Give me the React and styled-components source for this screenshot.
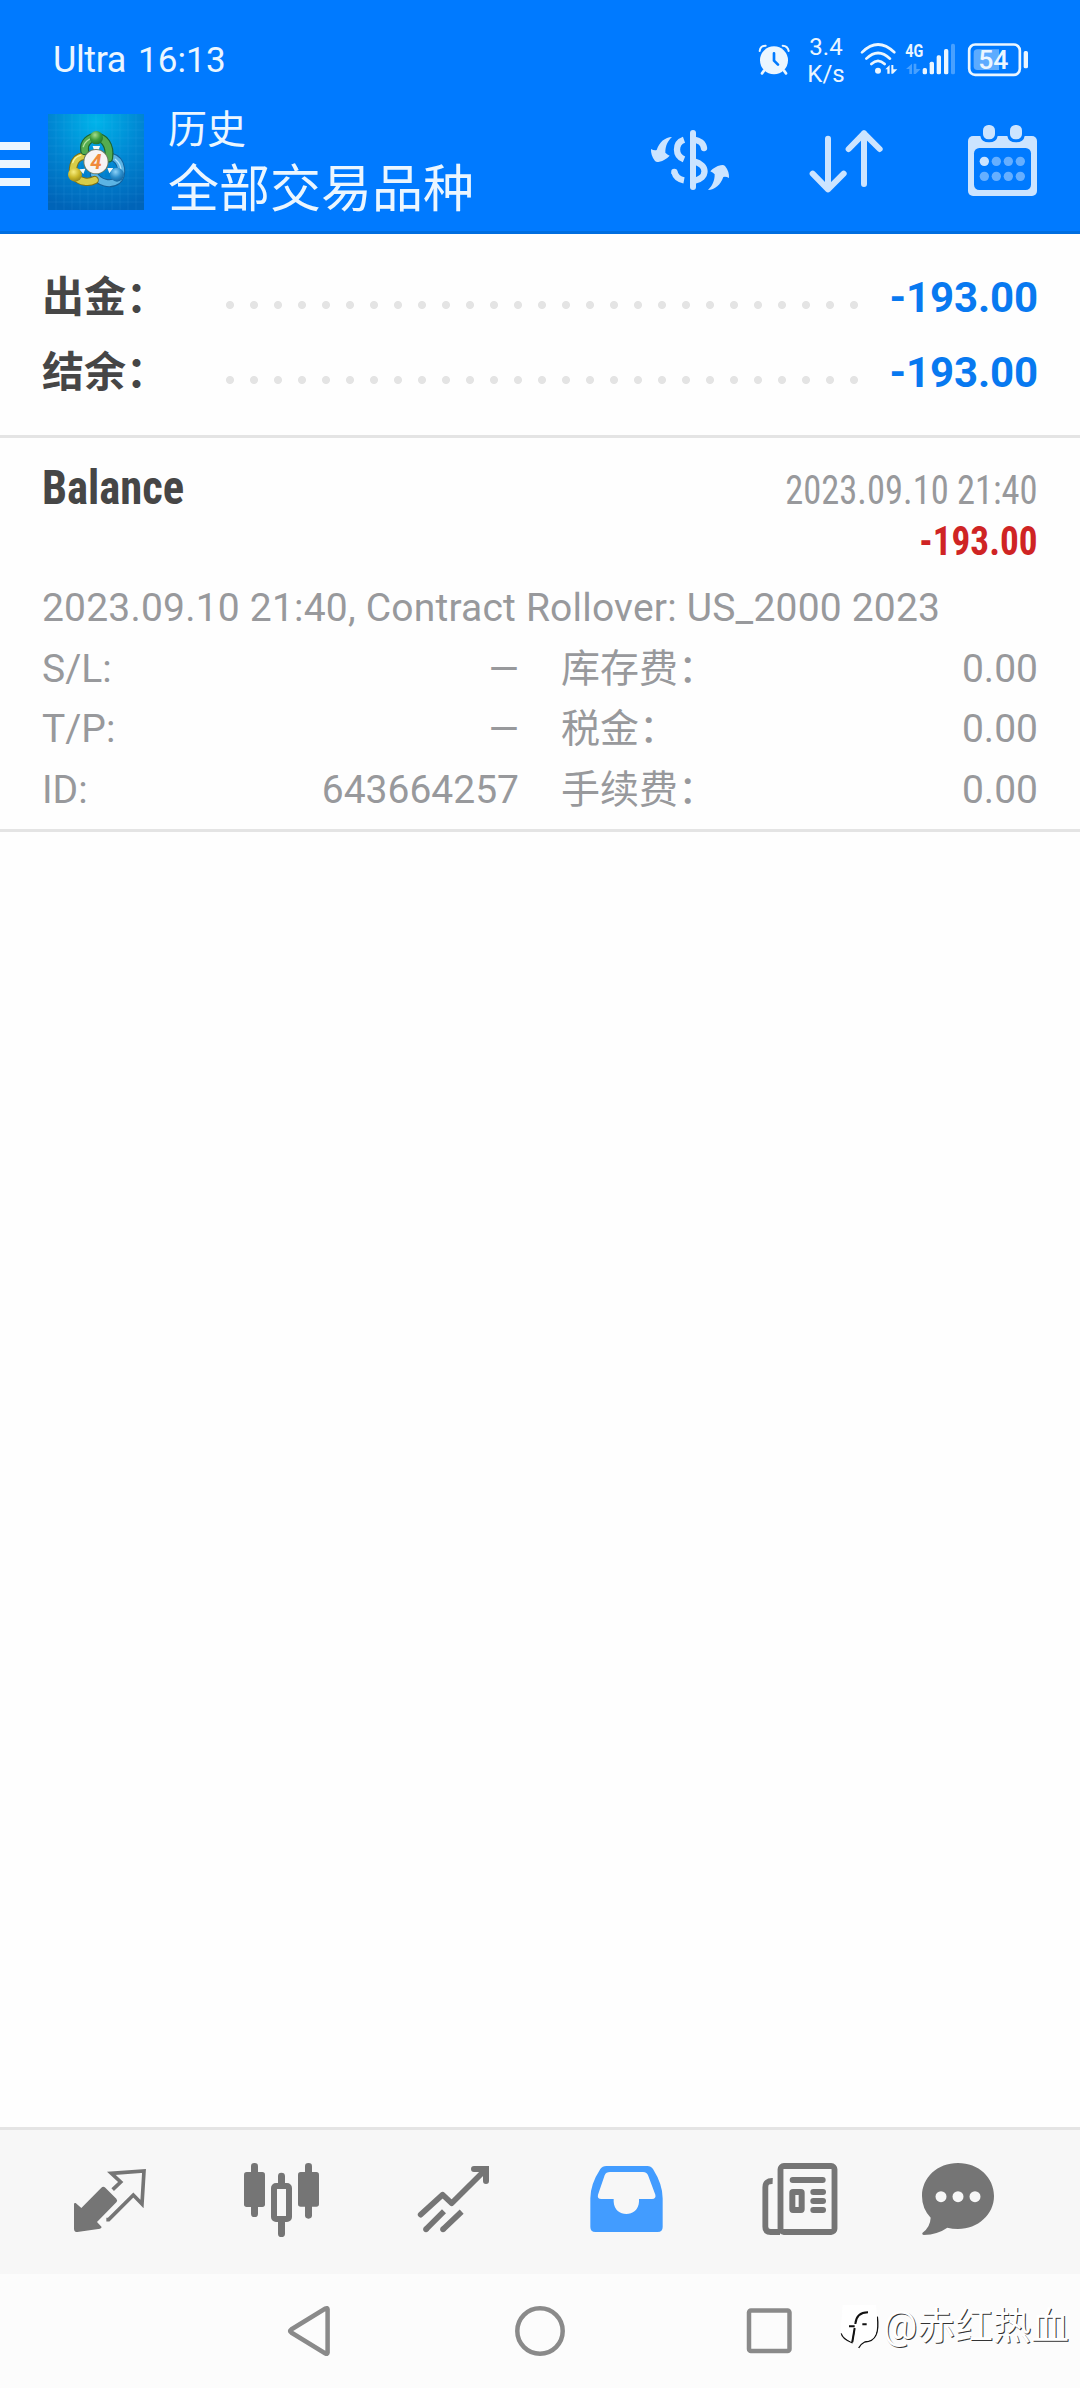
import styled, { createGlobalStyle } from 'styled-components';

const totals = [
  { label: '出金：', value: '-193.00' },
  { label: '结余：', value: '-193.00' },
];

const details = [
  { label: 'S/L:', value: '—', label2: '库存费：', value2: '0.00' },
  { label: 'T/P:', value: '—', label2: '税金：', value2: '0.00' },
  { label: 'ID:', value: '643664257', label2: '手续费：', value2: '0.00' },
];

const App = () => {
  return (
    <Screen>
      <GlobalStyle />
      <Header>
        <StatusBar />
        <Toolbar>
          <MenuIcon />
          <LogoIcon />
          <Titles>
            <Subtitle>历史</Subtitle>
            <Title>全部交易品种</Title>
          </Titles>
          <Actions>
            <CurrencyIcon />
            <SortIcon />
            <CalendarIcon />
          </Actions>
        </Toolbar>
      </Header>
      <Totals>
        {totals.map(total => (
          <TotalRow key={total.label}>
            <TotalLabel>{total.label}</TotalLabel>
            <Dots />
            <TotalValue>{total.value}</TotalValue>
          </TotalRow>
        ))}
      </Totals>
      <Deal>
        <DealHead>
          <DealName>Balance</DealName>
          <DealSide>
            <DealDate>2023.09.10 21:40</DealDate>
            <DealProfit>-193.00</DealProfit>
          </DealSide>
        </DealHead>
        <Comment>2023.09.10 21:40, Contract Rollover: US_2000 2023</Comment>
        {details.map(row => (
          <DetailRow key={row.label}>
            <DetailCell>
              <span>{row.label}</span>
              <span>{row.value}</span>
            </DetailCell>
            <DetailCell>
              <span>{row.label2}</span>
              <span>{row.value2}</span>
            </DetailCell>
          </DetailRow>
        ))}
      </Deal>
      <Spacer />
      <TabBar>
        <QuotesIcon />
        <ChartIcon />
        <TradeIcon />
        <HistoryIcon />
        <NewsIcon />
        <ChatIcon />
      </TabBar>
      <NavBar>
        <BackIcon />
        <HomeIcon />
        <RecentIcon />
        <Watermark>
          <WatermarkIcon />
          <WatermarkText>@赤红热血</WatermarkText>
        </Watermark>
      </NavBar>
    </Screen>
  );
};

export default App;

const StatusBar = () => {
  return (
    <StatusWrapper>
      <Carrier>Ultra</Carrier>
      <Clock>16:13</Clock>
      <StatusIcons>
        <svg width='32' height='35' viewBox='384 126 96 105'>
          <circle cx='432' cy='181' r='42' fill='#ebf6ff' />
          <path d='M389 153 Q391 137 407 137 M458 137 Q473 137 476 153' stroke='#ebf6ff' strokeWidth='6' strokeLinecap='round' fill='none' />
          <path d='M402 212 L396 220 M462 212 L468 220' stroke='#ebf6ff' strokeWidth='8' strokeLinecap='round' />
          <path d='M432 160 V182 L444 194' stroke='#007aff' strokeWidth='8' strokeLinecap='round' strokeLinejoin='round' fill='none' />
        </svg>
        <Speed>
          <span>3.4</span>
          <span>K/s</span>
        </Speed>
        <WifiSvg width='38' height='35' viewBox='690 126 114 105'>
          <g fill='none' stroke='#ebf6ff' strokeWidth='8' strokeLinecap='round'>
            <path d='M696 157 Q744 110 793 157' />
            <path d='M709 176 Q744 142 780 176' />
            <path d='M724 192 Q744 173 764 192' />
          </g>
          <circle cx='744' cy='212' r='9' fill='#ebf6ff' />
          <path d='M766 208 L779 195 V221 H772 V208 Z M784 195 H790 V208 H802 L789 221 H784 Z' fill='#ebf6ff' />
        </WifiSvg>
        <SignalSvg width='51' height='35' viewBox='825 126 153 105'>
          <text x='826' y='172' fontSize='56' fontWeight='700' fontFamily='Roboto, sans-serif' fill='#ebf6ff' textLength='54' lengthAdjust='spacingAndGlyphs'>4G</text>
          <path d='M828 207 L846 191 V222 H838 V207 Z M851 191 H859 V207 H872 L857 222 H851 Z' fill='#47a0ff' />
          <g fill='#ebf6ff'>
            <rect x='878' y='204' width='13' height='19' rx='5' />
            <rect x='899' y='185' width='13' height='38' rx='5' />
            <rect x='920' y='166' width='13' height='57' rx='5' />
            <rect x='942' y='147' width='13' height='76' rx='5' />
          </g>
          <rect x='963' y='131' width='12' height='92' rx='5' fill='#47a0ff' />
        </SignalSvg>
        <BatterySvg width='62' height='35' viewBox='1011 126 186 105'>
          <rect x='1017.5' y='133.5' width='152' height='91' rx='18' fill='none' stroke='#ebf6ff' strokeWidth='8' />
          <path d='M1042 148 H1107 V210 H1042 Q1031 210 1031 199 V159 Q1031 148 1042 148 Z' fill='#5cabff' />
          <rect x='1181' y='153' width='13' height='52' rx='5' fill='#ebf6ff' />
          <text x='1090' y='206' fontSize='80' fontWeight='500' fontFamily='Roboto, sans-serif' fill='#ebf6ff' textAnchor='middle'>54</text>
        </BatterySvg>
      </StatusIcons>
    </StatusWrapper>
  );
};

const MenuIcon = () => (
  <svg width='30' height='44' viewBox='0 0 30 44' fill='#ebf6ff'>
    <path d='M0 0 H30 V8 H0 Z M0 18 H30 V26 H0 Z M0 36 H30 V44 H0 Z' />
  </svg>
);

const LogoIcon = () => (
  <LogoSvg width='96' height='96' viewBox='144 342 288 288'>
    <defs>
      <radialGradient id='sky' cx='0.5' cy='0.08' r='0.95'>
        <stop offset='0' stopColor='#00b4ea' />
        <stop offset='0.5' stopColor='#0086d2' />
        <stop offset='1' stopColor='#0064b8' />
      </radialGradient>
      <radialGradient id='green' cx='0.4' cy='0.3' r='0.8'>
        <stop offset='0' stopColor='#a5dc8c' />
        <stop offset='0.5' stopColor='#3c9c3c' />
        <stop offset='1' stopColor='#1c6a28' />
      </radialGradient>
      <radialGradient id='yellow' cx='0.4' cy='0.3' r='0.8'>
        <stop offset='0' stopColor='#f8ee80' />
        <stop offset='0.5' stopColor='#cdb92a' />
        <stop offset='1' stopColor='#8a7c14' />
      </radialGradient>
      <radialGradient id='blue' cx='0.4' cy='0.3' r='0.8'>
        <stop offset='0' stopColor='#8cd2f8' />
        <stop offset='0.5' stopColor='#2c8ecc' />
        <stop offset='1' stopColor='#0c5a96' />
      </radialGradient>
    </defs>
    <rect x='144' y='342' width='288' height='288' fill='url(#sky)' />
    <path
      d='M168 342 V630 M192 342 V630 M216 342 V630 M240 342 V630 M264 342 V630 M288 342 V630 M312 342 V630 M336 342 V630 M360 342 V630 M384 342 V630 M408 342 V630 M144 366 H432 M144 390 H432 M144 414 H432 M144 438 H432 M144 462 H432 M144 486 H432 M144 510 H432 M144 534 H432 M144 558 H432 M144 582 H432 M144 606 H432'
      stroke='#5cc8f8'
      strokeOpacity='0.16'
      strokeWidth='2'
    />
    <g fill='none' strokeLinecap='round'>
      <path d='M333 470 C370 480 370 530 352 542 C330 558 298 548 282 524' stroke='#14609a' strokeWidth='24' />
      <path d='M333 470 C370 480 370 530 352 542 C330 558 298 548 282 524' stroke='#5cb4e4' strokeWidth='18' />
      <path d='M250 468 C218 474 212 514 228 532 C240 546 266 550 284 540' stroke='#7c7014' strokeWidth='25' />
      <path d='M250 468 C218 474 212 514 228 532 C240 546 266 550 284 540' stroke='#d8cc48' strokeWidth='19' />
      <path d='M254 452 C250 426 270 412 289 412 C312 412 332 436 326 474' stroke='#1c6430' strokeWidth='27' />
      <path d='M254 452 C250 426 270 412 289 412 C312 412 332 436 326 474' stroke='#54ac50' strokeWidth='20' />
      <path d='M250 440 C254 424 268 416 276 416' stroke='#b4e4a0' strokeWidth='4' />
      <path d='M218 488 C222 476 232 468 242 466' stroke='#f8f4a0' strokeWidth='4' />
      <path d='M346 478 C362 492 364 508 362 518' stroke='#b4e4ff' strokeWidth='4' />
    </g>
    <circle cx='289' cy='413' r='20' fill='url(#green)' />
    <circle cx='225' cy='524' r='21' fill='url(#yellow)' />
    <circle cx='351' cy='524' r='21' fill='url(#blue)' />
    <path d='M278 438 H300 L294 456 H284 Z M238 508 L256 506 L250 522 Z M322 504 H340 L328 520 Z' fill='#f4f8f4' />
    <circle cx='288' cy='485' r='38' fill='#6c7c64' />
    <circle cx='288' cy='485' r='35' fill='#f6f4f4' />
    <text x='288' y='507' fontSize='62' fontWeight='700' fontStyle='italic' fontFamily='Roboto, sans-serif' fill='#f08a3c' textAnchor='middle'>4</text>
  </LogoSvg>
);

const CurrencyIcon = () => (
  <svg width='80' height='73' viewBox='60 372 240 219'>
    <g fill='none' stroke='#cce4ff' strokeWidth='19'>
      <path d='M189 399 V561' strokeWidth='18' strokeLinecap='round' />
      <path d='M192 419 C208 421 220 430 222 444' strokeLinecap='round' />
      <path d='M162 419 C134 429 134 467 162 478' />
      <path d='M192 484 C234 494 234 534 192 543' />
      <path d='M133 516 C136 528 146 538 162 541' />
      <circle cx='133' cy='516' r='9.5' fill='#cce4ff' stroke='none' />
    </g>
    <g fill='#cce4ff'>
      <path id='swapArrow' d='M126 411 C105 412 88 426 80 450 Q72 452 63 447 Q62 467 75 483 Q80 488 88 485 Q106 481 119 467 Q112 464 106 458 C106 438 113 423 126 411 Z' />
      <use href='#swapArrow' transform='rotate(180 180 490.5)' />
    </g>
  </svg>
);

const SortIcon = () => (
  <SortSvg width='76' height='73' viewBox='534 372 228 219'>
    <g fill='none' stroke='#cce4ff' strokeWidth='18' strokeLinecap='round' strokeLinejoin='round'>
      <path d='M594 416 V568 M548 521 L594 568 L641 521' />
      <path d='M702 552 V400 M656 447 L702 400 L749 447' />
    </g>
  </SortSvg>
);

const CalendarIcon = () => (
  <CalendarSvg width='71' height='73' viewBox='1011 372 213 219'>
    <rect x='1014' y='408' width='207' height='180' rx='15' fill='#cce4ff' />
    <rect x='1032' y='444' width='171' height='126' rx='16' fill='#007aff' />
    <path d='M1051 400 V408 Q1054 427 1077 427 Q1100 427 1103 408 V400 Z M1132 400 V408 Q1135 427 1158 427 Q1181 427 1184 408 V400 Z' fill='#007aff' />
    <rect x='1059' y='375' width='36' height='43' rx='16' fill='#cce4ff' />
    <rect x='1140' y='375' width='36' height='43' rx='16' fill='#cce4ff' />
    {[484, 529].map(y =>
      [1063, 1099, 1135, 1171].map(x => (
        <circle key={`${x}-${y}`} cx={x} cy={y} r='14' fill={x === 1063 && y === 484 ? '#cce4ff' : '#66afff'} />
      ))
    )}
  </CalendarSvg>
);

const QuotesIcon = () => (
  <TabSvg viewBox='30 90 360 360'>
    <path d='M184 233 Q190 228 196 233 L229 266 Q234 272 229 277 L171 336 L185 351 Q184 355 180 356 L112 366 Q102 366 102 356 V282 Q102 278 107 279 L124 294 Z' />
    <path d='M218 239 L242 216 L214 190 L312 183 L306 282 L280 255 L206 329 L199 329' fill='none' stroke='#757575' strokeWidth='11' />
  </TabSvg>
);

const ChartIcon = () => (
  <TabSvg viewBox='546 90 360 360'>
    <rect x='633' y='159' width='21' height='162' rx='10' />
    <rect x='612' y='186' width='63' height='105' rx='8' />
    <rect x='795' y='159' width='21' height='167' rx='10' />
    <rect x='774' y='186' width='63' height='104' rx='8' />
    <path d='M714 198 Q714 188 724 188 Q735 188 735 198 V219 H714 Z M714 330 H735 V371 Q735 381 724 381 Q714 381 714 371 Z' />
    <rect x='702' y='228' width='45' height='99' rx='6' fill='none' stroke='#757575' strokeWidth='18' />
  </TabSvg>
);

const TradeIcon = () => (
  <TabSvg viewBox='1062 90 360 360'>
    <g fill='none' stroke='#757575' strokeWidth='17'>
      <path d='M1142 314 L1208 254 L1235 280 L1336 179' strokeLinecap='round' strokeLinejoin='round' />
      <path d='M1302 177 H1338 V213' strokeWidth='18' strokeLinecap='round' />
      <path d='M1158 358 L1212 304 M1209 358 L1265 305' />
    </g>
    <circle cx='1158' cy='358' r='8.5' />
    <circle cx='1209' cy='358' r='8.5' />
  </TabSvg>
);

const HistoryIcon = () => (
  <TabSvg viewBox='18 90 360 360' $active>
    <path
      fillRule='evenodd'
      d='M139 168 H262 Q273 168 279 177 Q308 223 308 265 V351 Q308 366 293 366 H106 Q91 366 91 351 V265 Q91 223 121 177 Q127 168 139 168 Z M150 186 Q138 186 134 196 L114 254 Q111 267 124 267 H161 V275 C163 324 235 324 237 275 V267 H276 Q289 266 286 254 L265 198 Q261 186 249 186 Z'
    />
  </TabSvg>
);

const NewsIcon = () => (
  <TabSvg viewBox='534 90 360 360'>
    <rect x='661.5' y='168' width='162' height='198' rx='10' fill='none' stroke='#757575' strokeWidth='17.5' />
    <path d='M638 213 Q616 212 616 232 V350 Q616 366 632 366 H660' fill='none' stroke='#757575' strokeWidth='17.5' />
    <rect x='689' y='201' width='108' height='18' rx='9' />
    <rect x='751' y='237' width='47' height='18' rx='9' />
    <rect x='751' y='264' width='47' height='18' rx='9' />
    <rect x='751' y='291' width='47' height='18' rx='9' />
    <rect x='697' y='246' width='28' height='54' rx='2' fill='none' stroke='#757575' strokeWidth='18' strokeLinejoin='round' />
  </TabSvg>
);

const ChatIcon = () => (
  <TabSvg viewBox='1050 90 360 360'>
    <path d='M1194 159 C1256 159 1302 203 1302 258 C1302 313 1254 357 1194 357 Q1177 357 1162 353 Q1134 373 1091 375 Q1085 374 1087 369 Q1111 351 1112 323 Q1086 296 1086 258 C1086 203 1132 159 1194 159 Z' />
    <circle cx='1143' cy='260' r='16.5' fill='#f7f7f7' />
    <circle cx='1194' cy='260' r='16.5' fill='#f7f7f7' />
    <circle cx='1245' cy='260' r='16.5' fill='#f7f7f7' />
  </TabSvg>
);

const BackIcon = () => (
  <NavSvg viewBox='0 0 60 60'>
    <path d='M47.6 8.2 V51.8 Q47.4 53.5 45.4 52.5 L11.2 31.5 Q9 30 11.2 28.5 L45.4 7.5 Q47.4 6.5 47.6 8.2 Z' />
  </NavSvg>
);

const HomeIcon = () => (
  <NavSvg viewBox='0 0 60 60'>
    <circle cx='30' cy='30' r='22.7' />
  </NavSvg>
);

const RecentIcon = () => (
  <NavSvg viewBox='0 0 60 60'>
    <rect x='9' y='9.5' width='40.5' height='40.5' rx='2' />
  </NavSvg>
);

const WatermarkIcon = () => (
  <svg width='40' height='45' viewBox='114 112 120 135'>
    <path d='M118 200 Q120 215 150 228 L158 186 M226 150 C232 196 222 226 188 226 Q176 232 170 244' fill='none' stroke='#111' strokeWidth='4' />
    <path d='M122 116 H222 Q228 160 222 200 Q214 224 184 224 L170 236 V222 L156 184 L148 226 Q120 212 116 190 Z' fill='#fff' />
    <path d='M141 179 H158 M160 172 C162 148 176 137 198 137 M158 184 L151 226 M181 173 H194' fill='none' stroke='#111' strokeWidth='6' />
  </svg>
);

const GlobalStyle = createGlobalStyle`
  * {
    box-sizing: border-box;
  }
  body {
    margin: 0;
    background: #fff;
    font-family: Roboto, 'Noto Sans CJK SC', sans-serif;
  }
  svg {
    display: block;
    flex-shrink: 0;
    overflow: visible;
  }
`;

const Screen = styled.div`
  display: flex;
  flex-direction: column;
  width: 1080px;
  height: 2388px;
  overflow: hidden;
  background: #fefefe;
`;

const Header = styled.header`
  height: 234px;
  background: #007aff;
  border-bottom: 3px solid #006ee0;
  color: #ebf6ff;
`;

const StatusWrapper = styled.div`
  display: flex;
  align-items: flex-start;
  height: 105px;
  padding: 42px 51px 0 53px;
`;

const Carrier = styled.span`
  width: 85px;
  margin-top: -2px;
  font-size: 36px;
  line-height: 41px;
  font-weight: 450;
  letter-spacing: -0.4px;
`;

const Clock = styled(Carrier)`
  width: auto;
  font-size: 35px;
  letter-spacing: 0.1px;
`;

const StatusIcons = styled.div`
  display: flex;
  margin-left: auto;
`;

const Speed = styled.div`
  display: flex;
  flex-direction: column;
  align-items: center;
  width: 36px;
  margin: -8px 0 0 18px;
  font-size: 24px;
  line-height: 27px;
  font-weight: 450;
`;

const WifiSvg = styled.svg`
  margin-left: 16px;
`;

const SignalSvg = styled.svg`
  margin-left: 7px;
`;

const BatterySvg = styled.svg`
  margin-left: 11px;
`;

const Toolbar = styled.div`
  display: flex;
  align-items: center;
  height: 126px;
  padding: 0 42px 8px 0;
`;

const LogoSvg = styled.svg`
  margin: -4px 0 0 18px;
`;

const Titles = styled.div`
  margin: 0 0 0 24px;
`;

const Subtitle = styled.div`
  font-size: 39px;
  line-height: 52px;
`;

const Title = styled.div`
  font-size: 51px;
  line-height: 68px;
`;

const Actions = styled.div`
  display: flex;
  margin: -7px 0 0 auto;
`;

const SortSvg = styled.svg`
  margin-left: 78px;
`;

const CalendarSvg = styled.svg`
  margin-left: 83px;
`;

const Totals = styled.section`
  height: 204px;
  padding: 26px 42px 0;
  border-bottom: 3px solid #e4e4e4;
`;

const TotalRow = styled.div`
  display: flex;
  height: 75px;
  font-size: 42px;
  line-height: 75px;
  font-weight: 700;
`;

const TotalLabel = styled.span`
  width: 176px;
  color: #464646;
`;

const Dots = styled.div`
  width: 648px;
  height: 24px;
  margin-top: 33px;
  background: radial-gradient(circle, #e4e4e4 3.6px, transparent 4.4px) 0 0 / 24px 24px;
`;

const TotalValue = styled.span`
  margin-left: auto;
  letter-spacing: -0.1px;
  color: #0879f0;
`;

const Deal = styled.section`
  height: 394px;
  padding: 22px 42px 0;
  border-bottom: 3px solid #e4e4e4;
  color: #98999c;
  font-size: 39px;
`;

const DealHead = styled.div`
  display: flex;
  justify-content: space-between;
  height: 118px;
  font-stretch: 75%;
  font-family: 'Roboto Condensed', Roboto, sans-serif;
`;

const DealName = styled.div`
  font-size: 48px;
  line-height: 56px;
  font-weight: 700;
  color: #464646;
  transform: scaleX(0.93);
  transform-origin: left;
`;

const DealSide = styled.div`
  padding-top: 5px;
  text-align: right;
  font-size: 40px;
  line-height: 51px;
`;

const DealDate = styled.div`
  transform: scaleX(0.912);
  transform-origin: right;
`;

const DealProfit = styled.div`
  font-weight: 700;
  color: #cf2424;
  transform: scaleX(0.93);
  transform-origin: right;
`;

const Comment = styled.div`
  height: 60.5px;
  line-height: 60px;
  letter-spacing: 0.2px;
  white-space: nowrap;
`;

const DetailRow = styled.div`
  display: flex;
  gap: 42px;
  height: 60.5px;
  line-height: 60px;
`;

const DetailCell = styled.div`
  display: flex;
  justify-content: space-between;
  flex: 1;
`;

const Spacer = styled.div`
  flex: 1;
`;

const TabBar = styled.nav`
  display: flex;
  justify-content: space-between;
  height: 147px;
  padding: 10px 50px 0;
  background: #f7f7f7;
  border-top: 3px solid #e4e4e4;
`;

const TabSvg = styled.svg`
  width: 120px;
  height: 120px;
  fill: ${props => (props.$active ? '#429cff' : '#757575')};
`;

const NavBar = styled.nav`
  position: relative;
  display: flex;
  justify-content: center;
  gap: 170px;
  height: 114px;
  padding-top: 27px;
  background: #fcfcfc;
`;

const NavSvg = styled.svg`
  width: 60px;
  height: 60px;
  fill: none;
  stroke: #8a8a8a;
  stroke-width: 4.5px;
`;

const Watermark = styled.div`
  position: absolute;
  right: 11px;
  top: 29px;
  display: flex;
  align-items: center;
  gap: 3px;
`;

const WatermarkText = styled.span`
  font-size: 38px;
  line-height: 46px;
  color: #fff;
  text-shadow: 1px 1px 0 #333;
`;
